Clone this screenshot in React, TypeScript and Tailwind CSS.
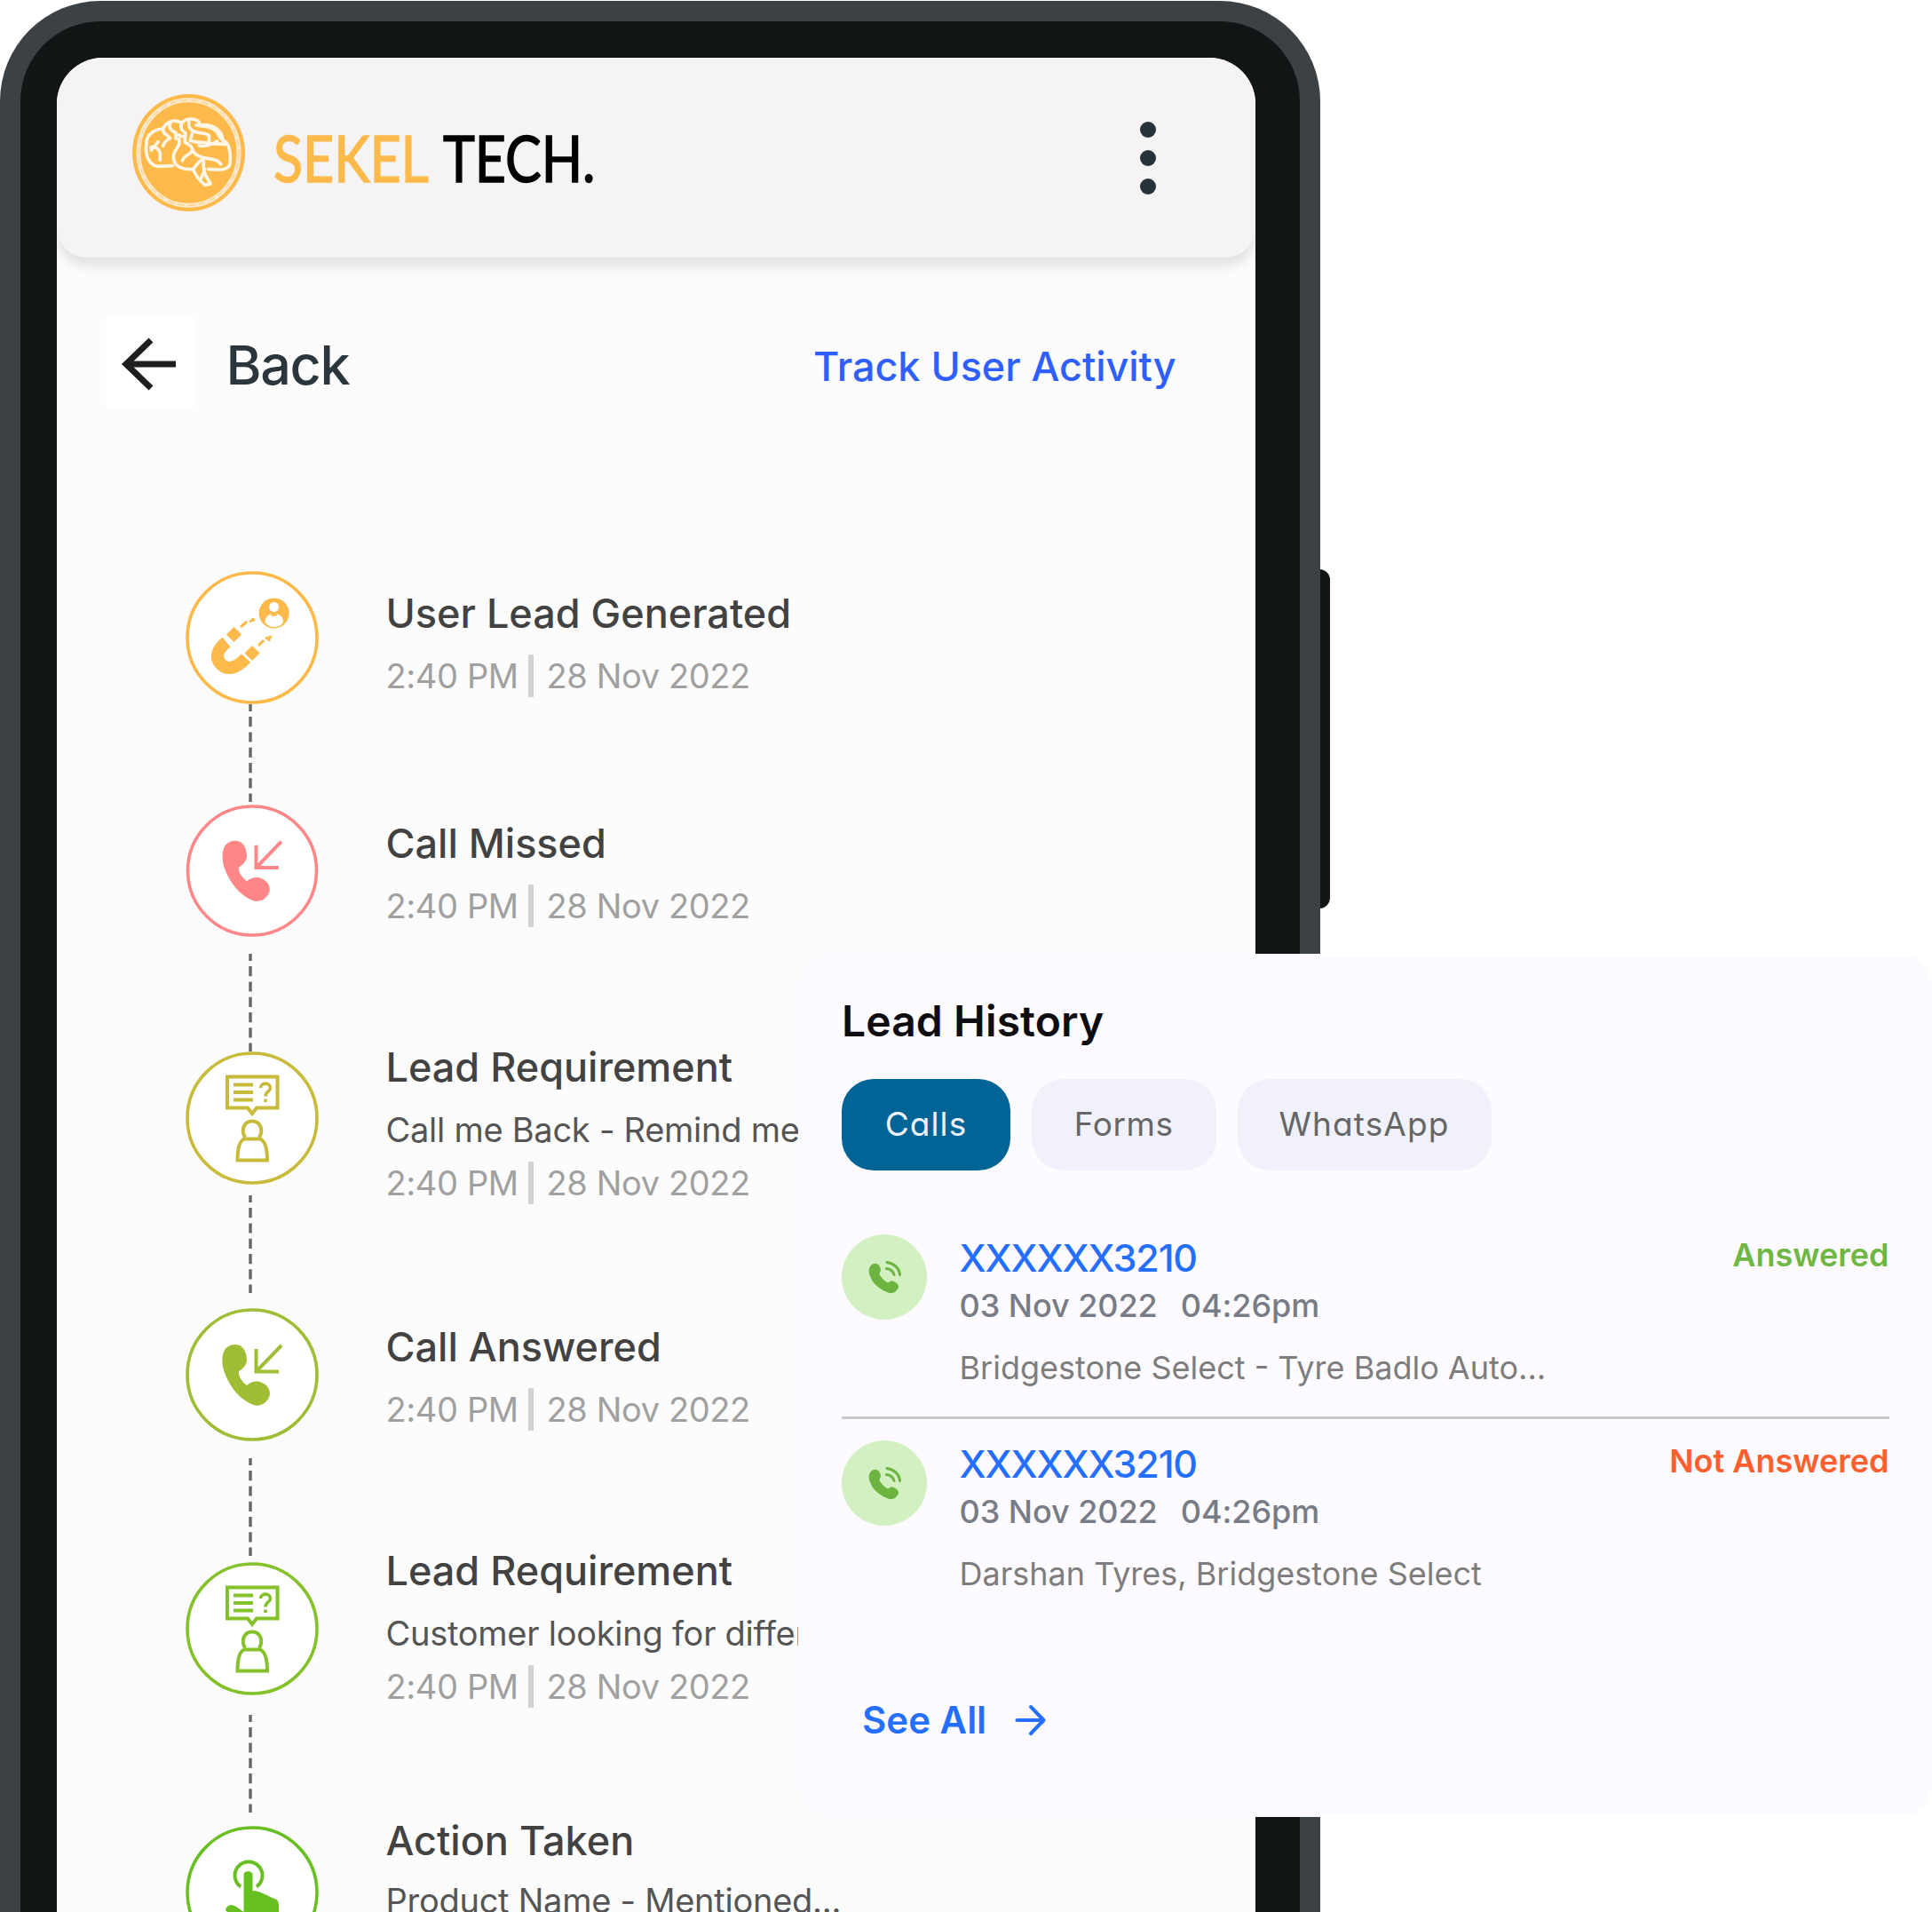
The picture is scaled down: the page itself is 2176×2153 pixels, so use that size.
import React from "react";

const INTER = "font-['Inter',sans-serif]";

function BrainLogo() {
  return (
    <svg viewBox="58 47 382 396" preserveAspectRatio="none" className="h-[132px] w-[127px] shrink-0" fill="none">
      <ellipse cx="249" cy="245" rx="191" ry="198" fill="#fdb94a" />
      <ellipse cx="249" cy="245" rx="170" ry="178" stroke="#fbe9cc" strokeWidth="15" />
      <ellipse cx="249" cy="245" rx="170" ry="178" stroke="#fdc875" strokeWidth="3" strokeDasharray="22 14" />
      <g stroke="#fff6e6" strokeWidth="11" strokeLinecap="round" strokeLinejoin="round">
        <path d="M106 212C106 184 132 166 162 164C172 140 200 130 224 144C246 124 284 128 288 152C330 144 366 172 364 204C388 206 392 250 388 286C382 304 350 304 316 300" />
        <path d="M106 212C100 250 112 284 142 291L194 289" />
        <path d="M216 198C226 226 192 234 198 266C202 294 232 304 264 300C272 322 290 342 304 354L323 350C308 326 294 304 300 272" />
        <path d="M228 272C232 252 258 252 262 236C268 252 290 262 312 264C334 266 352 270 358 284" />
        <path d="M120 228C132 220 148 230 152 246V270" />
        <path d="M122 236L146 208M162 166C160 184 178 182 186 196C174 202 166 210 162 222" />
        <path d="M186 146C180 160 190 172 204 176L206 198M226 146C218 160 226 172 238 178L236 210" />
        <path d="M206 182L228 190M250 140C246 158 254 168 270 174C290 182 306 174 318 188V208" />
        <path d="M262 178L254 204C280 214 300 206 316 214L372 216" />
        <path d="M274 152L308 156C330 160 348 172 352 190L378 214" />
        <path d="M240 212C256 220 262 226 262 240M284 220C300 226 330 218 346 206" />
        <path d="M264 300L284 276L296 268M292 330L304 300" />
      </g>
    </svg>
  );
}

function MagnetIcon() {
  return (
    <svg viewBox="0 0 150 150" className="size-[150px]" fill="none">
      <circle cx="75" cy="75" r="73" fill="#fff" stroke="#fdb94a" strokeWidth="3.6" />
      <path d="M46 80C35 89 33 98 40 105C47 112 57 110 68 98" stroke="#fdb94a" strokeWidth="14" />
      <rect x="48.5" y="65.5" width="12" height="12" transform="rotate(45 54.5 71.5)" fill="#fdb94a" />
      <rect x="69" y="86.5" width="12" height="12" transform="rotate(45 75 92.5)" fill="#fdb94a" />
      <path d="M62 63L69 57M72 57L78 54M82 84L88 78M90 76L97 74M76 57V53M94 79V74" stroke="#fdb94a" strokeWidth="3" />
      <circle cx="99.6" cy="47.5" r="17" fill="#fdb94a" />
      <circle cx="99.6" cy="40.5" r="5.5" fill="#fff" />
      <path d="M89.500 57C89.500 45 110 45 110 57C107 65 93 65 89.500 57Z" fill="#fff" />
      <path d="M96.500 48.500C98 50 101 50 102.500 48.500" stroke="#fdb94a" strokeWidth="2.5" />
    </svg>
  );
}

function CallIcon({ color }: { color: string }) {
  return (
    <svg viewBox="0 0 150 150" className="size-[150px]" fill="none">
      <circle cx="75" cy="75" r="73" fill="#fff" stroke={color} strokeWidth="3.6" />
      <path
        d="M43 49C46 42 54 39.500 61 42C67 45 68.500 52 69 58C69 64 64 69 60 71C59 77 64 83 69 87C73 83 80 81 86 84C93 87 96 93 94.500 99C92 106 86 110.500 78 109.500C60 104 46 84 42 66C41 60 41 54 43 49Z"
        fill={color}
      />
      <path d="M79.500 46V71.500H105M79.500 71.500L108 42" stroke={color} strokeWidth="4" />
    </svg>
  );
}

function RequirementIcon({ color }: { color: string }) {
  return (
    <svg viewBox="0 0 150 150" className="size-[150px]" fill="none" stroke={color}>
      <circle cx="75" cy="75" r="73" fill="#fff" strokeWidth="3.6" />
      <path d="M47 28.500H103.500V63.500H80L75 70L70 63.500H47Z" strokeWidth="4" />
      <path d="M54 37.500H76M54 46H76M54 54.500H76" strokeWidth="3.8" />
      <path d="M84.500 41C84.500 34.500 95.500 34.500 95.500 41C95.500 45 90 45 90 50.500M90 53.500V57" strokeWidth="3.6" />
      <path d="M67 97C62 88 66 78.500 75 78.500C84 78.500 88 88 83 97" strokeWidth="4" />
      <path d="M66 98.500H84C90 101 92 110 92 122.500H58.500C58.500 110 60 101 66 98.500Z" strokeWidth="4" />
    </svg>
  );
}

function TouchIcon() {
  return (
    <svg viewBox="0 0 150 150" className="size-[150px]" fill="none">
      <circle cx="75" cy="75" r="73" fill="#fff" stroke="#67bf22" strokeWidth="3.6" />
      <path d="M62 68.500A15.500 15.500 0 1 1 80 68.500" stroke="#67bf22" strokeWidth="4" />
      <path
        d="M65.500 55C65.500 50 75.500 50 75.500 55V73C84 73 92 79 100 82C104 83 105 86 105 90V108C103 114 98 118 94 120H70C64 110 52 102 45 95C46 89 52 88 57 91L65.500 97Z"
        fill="#67bf22"
      />
    </svg>
  );
}

function Connector() {
  return (
    <svg viewBox="0 0 4 110" className="h-[110px] w-1">
      <path d="M2 0V110" stroke="#666" strokeWidth="3.4" strokeDasharray="11.2 6.1" strokeDashoffset="3.2" />
    </svg>
  );
}

function RingingPhone() {
  return (
    <svg viewBox="0 0 37 37" className="size-[37px]" fill="none">
      <path
        d="M3 5C5 2 11 1.500 12.700 6C14.500 9 14.500 11 12.500 13.500C12.500 17 18 22.500 22 24.500C25 21.500 28 22 30.500 24C34.500 27 35 29 32.500 32C30.500 35.500 27 37 22 35.500C10 31 2.500 22 .8 13C.3 9 1 7 3 5Z"
        fill="#6cb33f"
      />
      <path d="M21 1.500C29 2.500 35 8 35.500 15.500M20.500 8.500C25 9 28 11.500 29 15.500" stroke="#6cb33f" strokeWidth="3" strokeLinecap="round" />
    </svg>
  );
}

type Step = {
  title: string;
  note?: string;
  icon: React.ReactNode;
  row: string;
  text: string;
  link?: string;
};

const steps: Step[] = [
  { title: "User Lead Generated", icon: <MagnetIcon />, row: "h-[263px]", text: "pt-[18px]", link: "mt-0" },
  { title: "Call Missed", icon: <CallIcon color="#ff8787" />, row: "h-[278px]", text: "pt-[14px]", link: "mt-[19px]" },
  {
    title: "Lead Requirement",
    note: "Call me Back - Remind me",
    icon: <RequirementIcon color="#c8bb3a" />,
    row: "h-[289px]",
    text: "-mt-[12px]",
    link: "mt-[12px]",
  },
  { title: "Call Answered", icon: <CallIcon color="#9fbe35" />, row: "h-[286px]", text: "pt-[14px]", link: "mt-[19px]" },
  {
    title: "Lead Requirement",
    note: "Customer looking for differ",
    icon: <RequirementIcon color="#84c12a" />,
    row: "h-[297px]",
    text: "-mt-[20px]",
    link: "mt-[22px]",
  },
  {
    title: "Action Taken",
    note: "Product Name - Mentioned...",
    icon: <TouchIcon />,
    row: "h-[263px]",
    text: "-mt-[13px]",
  },
];

function TimelineStep({ step, last }: { step: Step; last: boolean }) {
  return (
    <li className={`flex gap-[76px] ${step.row}`}>
      <div className="flex w-[150px] shrink-0 flex-col items-center">
        {step.icon}
        {step.link && (
          <div className={`mr-[4px] ${step.link}`}>
            <Connector />
          </div>
        )}
      </div>
      <div className={`whitespace-nowrap ${step.text}`}>
        <h3 className="text-[45px] leading-[60px] font-medium text-[#424242]">{step.title}</h3>
        {step.note && (
          <p className={`mb-3 text-[38px] leading-[48px] tracking-[-0.26px] text-[#555] ${last ? "mt-[13px]" : "mt-4"}`}>{step.note}</p>
        )}
        {!last && (
          <div className={`flex items-center text-[38px] leading-[48px] tracking-[-0.38px] text-[#a0a0a0] ${step.note ? "" : "mt-4"}`}>
            <span className="w-[160px]">2:40 PM</span>
            <span className="mr-[15px] h-[48px] w-[6px] bg-[#d2d2d2]" />
            <span>28 Nov 2022</span>
          </div>
        )}
      </div>
    </li>
  );
}

type Call = { place: string; status: string; tone: string };

const calls: Call[] = [
  { place: "Bridgestone Select - Tyre Badlo Auto...", status: "Answered", tone: "text-[#6fb744]" },
  { place: "Darshan Tyres, Bridgestone Select", status: "Not Answered", tone: "text-[#ff5f2e]" },
];

function CallRow({ call }: { call: Call }) {
  return (
    <div className="flex items-start whitespace-nowrap">
      <div className="flex size-[96px] shrink-0 items-center justify-center rounded-full bg-[#d2f0c1]">
        <RingingPhone />
      </div>
      <div className="ml-[36.500px] flex-1">
        <div className="text-[43px] leading-[53px] font-medium tracking-[-1.15px] text-[#256fff]">XXXXXX3210</div>
        <div className="mt-px flex gap-[26px] text-[36px] leading-[52px] font-medium tracking-[-0.05px] text-[#787c86]">
          <span>03 Nov 2022</span>
          <span>04:26pm</span>
        </div>
        <div className="mt-[22px] text-[36px] leading-[44px] text-[#7d7d7d]">{call.place}</div>
      </div>
      <div className={`text-[36px] leading-[46px] font-semibold ${call.tone}`}>{call.status}</div>
    </div>
  );
}

function Tab({ label, className }: { label: string; className: string }) {
  return (
    <button className={`flex h-[102.500px] items-center justify-center rounded-[36px] pb-px text-[37px] [font-feature-settings:'cv11'] ${className}`}>
      {label}
    </button>
  );
}

function LeadHistory() {
  return (
    <section className="absolute top-[1073.500px] left-[899px] h-[972px] w-[1277px] rounded-[36px] bg-[#fdfbff] pt-[47.500px] pr-[48.500px] pl-[49px]">
      <h2 className="text-[48px] leading-[58px] font-semibold tracking-[0.1px] text-[#0d0d0f]">Lead History</h2>
      <div className="mt-[36px] flex gap-6">
        <Tab label="Calls" className="w-[190px] bg-[#006496] tracking-[1.1px] text-[#eef2fa]" />
        <Tab label="Forms" className="w-[207.500px] bg-[#f0f1fa] tracking-[0.6px] text-[#666]" />
        <Tab label="WhatsApp" className="w-[286px] bg-[#f0f1fa] tracking-[1.1px] text-[#666]" />
      </div>
      <div className="mt-[72.500px] flex flex-col">
        <CallRow call={calls[0]} />
        <div className="mt-[33px] mb-[24px] h-[3px] bg-[#c5c9d1]" />
        <CallRow call={calls[1]} />
      </div>
      <div className="mt-[117px] ml-[23px] flex items-center gap-[32px] text-[#256fff]">
        <span className="text-[42px] leading-[52px] font-semibold">See All</span>
        <svg viewBox="0 0 36 36" className="size-[36px]" fill="none" stroke="#256fff" strokeWidth="4" strokeLinecap="round" strokeLinejoin="round">
          <path d="M2.500 18H32M18 3L32.500 18L18 33" />
        </svg>
      </div>
    </section>
  );
}

export default function App() {
  return (
    <div className={`relative h-[2153px] w-[2176px] overflow-hidden bg-white ${INTER}`}>
      <div className="absolute top-[641px] left-[1480px] h-[382px] w-[18px] rounded-r-[12px] bg-[#111515]" />
      <div className="relative mt-px h-[2252px] w-[1487px] rounded-t-[113px] bg-[#3b4144] pt-[23px] pr-[23px] pl-[22.500px]">
        <div className="h-full rounded-t-[90px] bg-[#111515] pt-[40.500px] pr-[50.500px] pl-[41px]">
          <div className="h-full overflow-hidden rounded-t-[52px] bg-[#fcfcfc]">
            <header className="flex h-[225.500px] items-center rounded-b-[34px] bg-[#f5f3f4] pr-[112px] pl-[85.500px] shadow-[0_10px_12px_rgba(0,0,0,0.1)]">
              <div className="-mt-[11px]">
                <BrainLogo />
              </div>
              <div className="ml-[32px] flex w-[380px] origin-left scale-x-[0.845] gap-[19px] font-['Lato',sans-serif] text-[72px] leading-[80px] whitespace-nowrap [-webkit-text-stroke:1.5px_currentColor]">
                <span className="text-[#fdb94a]">SEKEL</span>
                <span className="text-black">TECH.</span>
              </div>
              <div className="mt-[2px] ml-auto flex flex-col gap-[14px]">
                <span className="size-[18px] rounded-full bg-[#263238]" />
                <span className="size-[18px] rounded-full bg-[#263238]" />
                <span className="size-[18px] rounded-full bg-[#263238]" />
              </div>
            </header>
            <div className="mt-[68px] flex h-[101px] items-center pr-[89px] pl-[55px]">
              <div className="h-[101px] w-[102px] bg-white">
                <svg viewBox="0 0 102 101" className="h-[101px] w-[102px]" fill="none" stroke="#1f1f1f" strokeWidth="7">
                  <path d="M22 52H79M51 25L23 52L51 79" />
                </svg>
              </div>
              <span className="mt-[5px] ml-[34px] text-[61px] leading-[74px] font-medium tracking-[-1.3px] text-[#2b363c]">Back</span>
              <span className="mt-[8px] ml-auto text-[45px] leading-[56px] font-medium tracking-[-0.06px] text-[#2f5fff]">Track User Activity</span>
            </div>
            <ul className="mt-[184px] pl-[145px]">
              {steps.map((step, i) => (
                <TimelineStep key={i} step={step} last={i === steps.length - 1} />
              ))}
            </ul>
          </div>
        </div>
      </div>
      <LeadHistory />
    </div>
  );
}
